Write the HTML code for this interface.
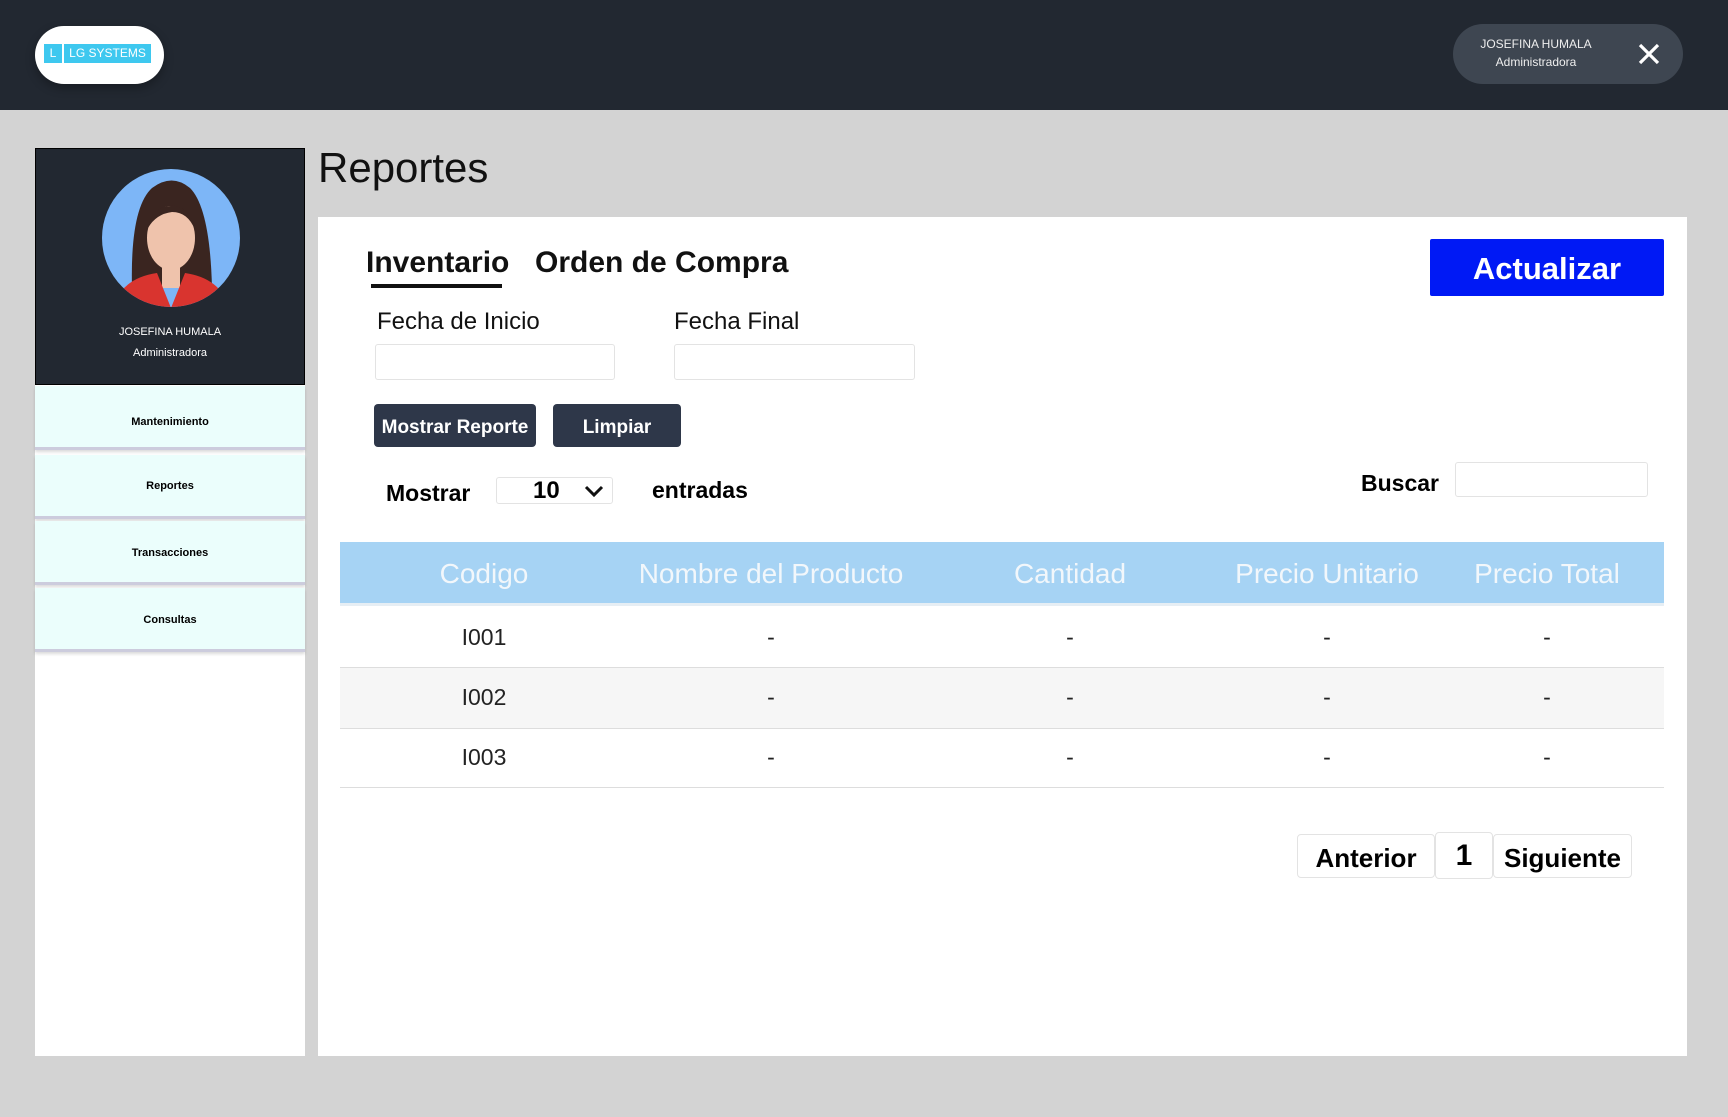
<!DOCTYPE html>
<html><head><meta charset="utf-8"><style>
*{box-sizing:border-box;margin:0;padding:0}
body{width:1728px;height:1117px;background:#d3d3d3;font-family:"Liberation Sans",sans-serif;position:relative;overflow:hidden}
.a{position:absolute}
.hdr{left:0;top:0;width:1728px;height:110px;background:#222831}
.logo{left:35px;top:26px;width:129px;height:58px;background:#fff;border-radius:29px;box-shadow:0 4px 10px rgba(0,0,0,.3)}
.lg{top:18px;height:19px;background:#3ec8ef;color:#fff;font-size:12px;line-height:19px;text-align:center}
.user{left:1453px;top:24px;width:230px;height:60px;background:#3e4651;border-radius:30px;color:#eee;font-size:12px}
.side{left:35px;top:148px;width:270px;height:908px;background:#fff}
.dark{left:35px;top:148px;width:270px;height:237px;background:#222831;border:1px solid #000}
.mi{left:35px;width:270px;height:64px;background:#ebfefc;font-size:11px;font-weight:bold;text-align:center;border-bottom:3px solid #ccd;box-shadow:0 2px 3px rgba(0,0,0,.15)}
.panel{left:318px;top:217px;width:1369px;height:839px;background:#fff}
.inp{background:#fff;border:1px solid #e3e3e3;border-radius:3px}
.btn{background:#2e3749;color:#fff;font-weight:bold;font-size:19px;border-radius:4px;text-align:center;line-height:47px}
.th{top:542px;height:64px;font-size:28px;color:#f2f7fb;line-height:64px;text-align:center}
.td{font-size:23px;color:#222;text-align:center}
.pg{top:834px;height:44px;border:1px solid #e3e3e3;border-radius:4px;font-weight:bold;font-size:26px;line-height:46px;text-align:center}
</style></head><body>
<div class="a hdr"></div>
<div class="a logo">
 <div class="a lg" style="left:9px;width:18px">L</div>
 <div class="a lg" style="left:29px;width:87px">LG SYSTEMS</div>
</div>
<div class="a user">
 <div class="a" style="left:0;width:166px;top:13px;text-align:center">JOSEFINA HUMALA</div>
 <div class="a" style="left:0;width:166px;top:31px;text-align:center">Administradora</div>
 <svg class="a" style="left:185px;top:19px" width="22" height="22" viewBox="0 0 22 22"><path d="M2 2L20 20M20 2L2 20" stroke="#fff" stroke-width="3.2"/></svg>
</div>

<div class="a side"></div>
<div class="a dark">
 <svg class="a" style="left:66px;top:19px" width="138" height="140" viewBox="0 0 138 140">
  <defs><clipPath id="c"><circle cx="69" cy="70" r="69"/></clipPath></defs>
  <g clip-path="url(#c)">
   <rect width="138" height="140" fill="#7db6f7"/>
   <path d="M30 120 Q28 40 50 20 Q70 5 88 20 Q108 40 110 120 Z" fill="#3a2520"/>
   <ellipse cx="69" cy="70" rx="24" ry="32" fill="#efc3ac"/>
   <rect x="60" y="95" width="18" height="25" fill="#efc3ac"/>
   <path d="M10 140 Q20 110 55 105 L69 140 L83 105 Q118 110 128 140 Z" fill="#d9342f"/>
   <path d="M46 60 Q50 36 74 38 Q90 42 93 62 Q86 44 70 44 Q54 46 46 60Z" fill="#3a2520"/>
  </g>
 </svg>
 <div class="a" style="left:0;width:268px;top:177px;text-align:center;color:#fff;font-size:11px">JOSEFINA HUMALA</div>
 <div class="a" style="left:0;width:268px;top:198px;text-align:center;color:#fff;font-size:11px">Administradora</div>
</div>
<div class="a mi" style="top:386px;line-height:72px">Mantenimiento</div>
<div class="a mi" style="top:455px;line-height:62px">Reportes</div>
<div class="a mi" style="top:521px;line-height:64px">Transacciones</div>
<div class="a mi" style="top:588px;line-height:64px">Consultas</div>

<div class="a" style="left:318px;top:144px;font-size:42px;color:#111">Reportes</div>
<div class="a panel"></div>
<div class="a" style="left:366px;top:246px;font-size:30px;font-weight:bold;color:#111">Inventario</div>
<div class="a" style="left:371px;top:284px;width:131px;height:4px;background:#111"></div>
<div class="a" style="left:535px;top:246px;font-size:30px;font-weight:bold;color:#111">Orden de Compra</div>
<div class="a" style="left:1430px;top:239px;width:234px;height:57px;background:#0019f5;color:#fff;font-size:31px;font-weight:bold;text-align:center;line-height:60px;border-radius:2px">Actualizar</div>
<div class="a" style="left:377px;top:308px;font-size:24px;color:#111">Fecha de Inicio</div>
<div class="a" style="left:674px;top:308px;font-size:24px;color:#111">Fecha Final</div>
<div class="a inp" style="left:375px;top:344px;width:240px;height:36px"></div>
<div class="a inp" style="left:674px;top:344px;width:241px;height:36px"></div>
<div class="a btn" style="left:374px;top:404px;width:162px;height:43px">Mostrar Reporte</div>
<div class="a btn" style="left:553px;top:404px;width:128px;height:43px">Limpiar</div>
<div class="a" style="left:386px;top:480px;font-size:23px;font-weight:bold">Mostrar</div>
<div class="a inp" style="left:496px;top:477px;width:117px;height:27px"></div>
<div class="a" style="left:533px;top:477px;font-size:24px;font-weight:bold">10</div>
<svg class="a" style="left:584px;top:484px" width="20" height="14" viewBox="0 0 20 14"><path d="M2 3L10 11L18 3" fill="none" stroke="#111" stroke-width="3"/></svg>
<div class="a" style="left:652px;top:477px;font-size:23px;font-weight:bold">entradas</div>
<div class="a" style="left:1361px;top:470px;font-size:23px;font-weight:bold">Buscar</div>
<div class="a inp" style="left:1455px;top:462px;width:193px;height:35px"></div>

<div class="a" style="left:340px;top:542px;width:1324px;height:64px;background:#a6d3f4;border-bottom:3px solid #e6eef4"></div>
<div class="a th" style="left:384px;width:200px">Codigo</div>
<div class="a th" style="left:601px;width:340px">Nombre del Producto</div>
<div class="a th" style="left:950px;width:240px">Cantidad</div>
<div class="a th" style="left:1200px;width:254px">Precio Unitario</div>
<div class="a th" style="left:1447px;width:200px">Precio Total</div>

<div class="a" style="left:340px;top:667px;width:1324px;height:1px;background:#ddd"></div>
<div class="a" style="left:340px;top:668px;width:1324px;height:60px;background:#f6f6f6"></div>
<div class="a" style="left:340px;top:728px;width:1324px;height:1px;background:#ddd"></div>
<div class="a" style="left:340px;top:787px;width:1324px;height:1px;background:#ddd"></div>

<div class="a td" style="left:384px;width:200px;top:624px">I001</div>
<div class="a td" style="left:384px;width:200px;top:684px">I002</div>
<div class="a td" style="left:384px;width:200px;top:744px">I003</div>
<div class="a td" style="left:671px;width:200px;top:624px">-</div>
<div class="a td" style="left:671px;width:200px;top:684px">-</div>
<div class="a td" style="left:671px;width:200px;top:744px">-</div>
<div class="a td" style="left:970px;width:200px;top:624px">-</div>
<div class="a td" style="left:970px;width:200px;top:684px">-</div>
<div class="a td" style="left:970px;width:200px;top:744px">-</div>
<div class="a td" style="left:1227px;width:200px;top:624px">-</div>
<div class="a td" style="left:1227px;width:200px;top:684px">-</div>
<div class="a td" style="left:1227px;width:200px;top:744px">-</div>
<div class="a td" style="left:1447px;width:200px;top:624px">-</div>
<div class="a td" style="left:1447px;width:200px;top:684px">-</div>
<div class="a td" style="left:1447px;width:200px;top:744px">-</div>

<div class="a pg" style="left:1297px;width:138px">Anterior</div>
<div class="a pg" style="left:1435px;width:58px;top:832px;height:47px;font-size:30px">1</div>
<div class="a pg" style="left:1493px;width:139px">Siguiente</div>
</body></html>
